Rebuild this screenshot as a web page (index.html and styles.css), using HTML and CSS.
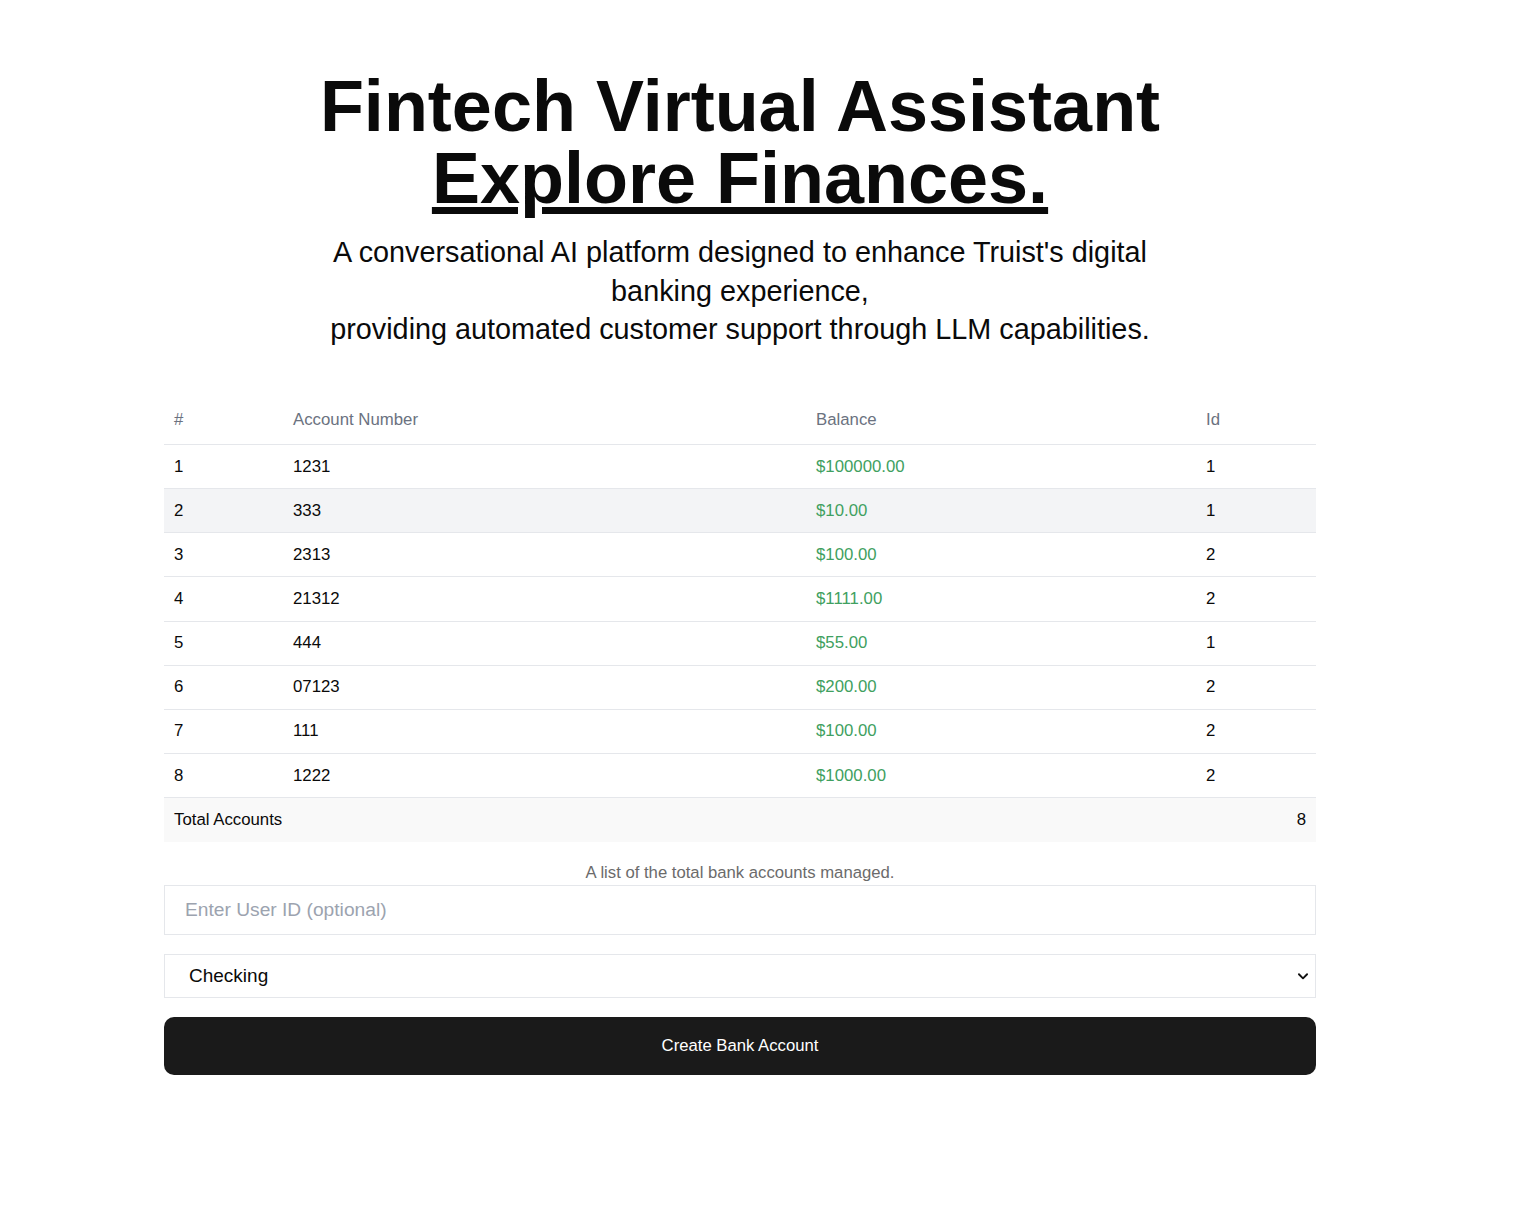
FILE: index.html
```html
<!doctype html>
<html>
<head>
    <meta charset="utf-8">
    <meta name="viewport" content="width=device-width, initial-scale=1">
    <title>Fintech Virtual Assistant</title>
    <link rel="stylesheet" href="styles.css">
</head>
<body>
    <main class="page">
        <section class="hero">
            <h1 class="title">Fintech Virtual Assistant<br><span class="title-link">Explore Finances.</span></h1>
            <p class="lead">A conversational AI platform designed to enhance Truist's digital banking experience,<br>providing automated customer support through LLM capabilities.</p>
        </section>

        <section class="accounts">
            <table class="accounts-table">
                <caption>A list of the total bank accounts managed.</caption>
                <colgroup>
                    <col class="col-num">
                    <col class="col-account">
                    <col class="col-balance">
                    <col class="col-id">
                </colgroup>
                <thead>
                    <tr>
                        <th>#</th>
                        <th>Account Number</th>
                        <th>Balance</th>
                        <th>Id</th>
                    </tr>
                </thead>
                <tbody>
                    <tr><td>1</td><td>1231</td><td class="balance">$100000.00</td><td>1</td></tr>
                    <tr class="hover"><td>2</td><td>333</td><td class="balance">$10.00</td><td>1</td></tr>
                    <tr><td>3</td><td>2313</td><td class="balance">$100.00</td><td>2</td></tr>
                    <tr><td>4</td><td>21312</td><td class="balance">$1111.00</td><td>2</td></tr>
                    <tr><td>5</td><td>444</td><td class="balance">$55.00</td><td>1</td></tr>
                    <tr><td>6</td><td>07123</td><td class="balance">$200.00</td><td>2</td></tr>
                    <tr><td>7</td><td>111</td><td class="balance">$100.00</td><td>2</td></tr>
                    <tr><td>8</td><td>1222</td><td class="balance">$1000.00</td><td>2</td></tr>
                </tbody>
                <tfoot>
                    <tr>
                        <td colspan="3">Total Accounts</td>
                        <td class="total">8</td>
                    </tr>
                </tfoot>
            </table>

            <form class="create-form">
                <input class="field" type="text" placeholder="Enter User ID (optional)">
                <div class="select-wrap">
                    <select class="field select">
                        <option>Checking</option>
                        <option>Savings</option>
                    </select>
                    <svg class="chevron" width="14" height="14" viewBox="0 0 24 24" fill="none" stroke="#111" stroke-width="3.2" stroke-linecap="round" stroke-linejoin="round"><path d="M5 9l7 7 7-7"/></svg>
                </div>
                <button class="create-btn" type="button">Create Bank Account</button>
            </form>
        </section>
    </main>
</body>
</html>
```

FILE: styles.css
```css
* {
    box-sizing: border-box;
}
body {
    margin: 0;
    font-family: "Liberation Sans", Arial, sans-serif;
    color: #0a0a0a;
    background-color: #fff;
}
.page {
    width: 1480px;
    padding-top: 70px;
}
.hero {
    text-align: center;
}
.title {
    margin: 0;
    font-size: 72px;
    line-height: 72px;
    font-weight: bold;
    color: #0a0a0a;
}
.title-link {
    text-decoration: underline;
}
.lead {
    width: 860px;
    margin: 19px auto 0;
    font-size: 28.8px;
    line-height: 38.5px;
}
.accounts {
    width: 1152px;
    margin: 47px auto 0;
}
.accounts-table {
    width: 100%;
    border-collapse: collapse;
    table-layout: fixed;
    font-size: 16.8px;
}
.col-num { width: 119px; }
.col-account { width: 523px; }
.col-balance { width: 390px; }
.col-id { width: 120px; }
.accounts-table caption {
    caption-side: bottom;
    margin-top: 21px;
    font-size: 16.7px;
    color: #6b6b6b;
}
.accounts-table th {
    height: 49px;
    padding: 0 10px;
    text-align: left;
    font-weight: normal;
    color: #6b7280;
    border-bottom: 1px solid #e5e7eb;
}
.accounts-table td {
    height: 44.15px;
    padding: 0 10px;
    border-bottom: 1px solid #e5e7eb;
}
.accounts-table tbody tr.hover {
    background-color: #f3f4f6;
}
.balance {
    color: #40a060;
}
.accounts-table tfoot td {
    background-color: #f9f9f9;
    border-bottom: none;
}
.accounts-table .total {
    text-align: right;
}
.create-form {
    display: flex;
    flex-direction: column;
    gap: 19px;
    margin-top: 2px;
}
.field {
    width: 100%;
    height: 50px;
    padding: 0 20px;
    font-family: "Liberation Sans", Arial, sans-serif;
    font-size: 19.2px;
    color: #0a0a0a;
    background-color: #fff;
    border: 1px solid #e5e7eb;
    border-radius: 0;
    outline: none;
}
.field::placeholder {
    color: #9ca3af;
}
.select-wrap {
    position: relative;
}
.select {
    height: 44px;
    padding: 0 24px;
    font-size: 19px;
    appearance: none;
}
.chevron {
    position: absolute;
    right: 6px;
    top: 15px;
    pointer-events: none;
}
.create-btn {
    height: 58px;
    border: none;
    border-radius: 10px;
    background-color: #1a1a1a;
    color: #fff;
    font-family: "Liberation Sans", Arial, sans-serif;
    font-size: 16.7px;
}
```
